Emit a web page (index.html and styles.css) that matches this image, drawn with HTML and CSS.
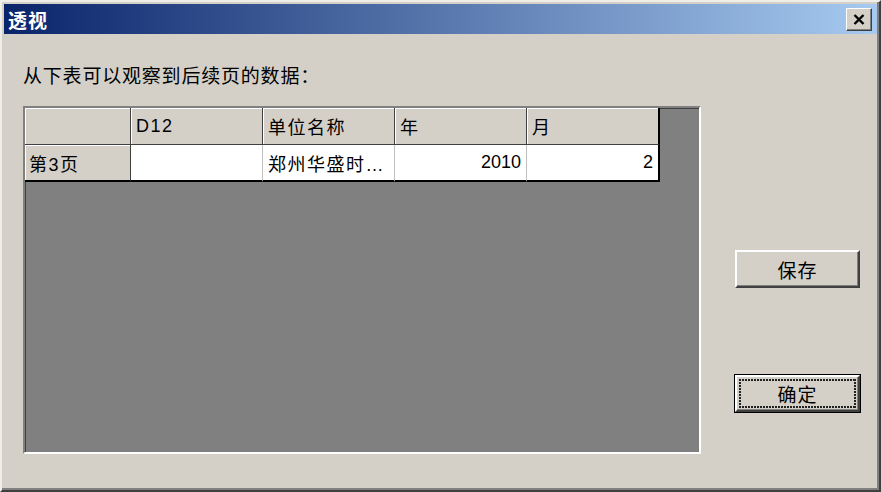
FILE: index.html
```html
<!DOCTYPE html>
<html lang="zh-CN">
<head>
    <meta charset="UTF-8">
    <meta name="viewport" content="width=device-width, initial-scale=1.0">
    <title>透视</title>
    <link rel="stylesheet" href="styles.css">
</head>
<body>
    <div class="window">
        <div class="titlebar">
            <span class="title">透视</span>
            <button class="close-btn" aria-label="关闭">
                <svg width="12" height="11" viewBox="0 0 12 11">
                    <path d="M1.5 1 L10.5 10 M10.5 1 L1.5 10" stroke="#000" stroke-width="2.4" fill="none"/>
                </svg>
            </button>
        </div>

        <div class="content">
            <div class="left">
                <p class="hint">从下表可以观察到后续页的数据：</p>

                <div class="panel">
                    <div class="grid">
                        <!-- header row -->
                        <div class="cell head"></div>
                        <div class="cell head">D12</div>
                        <div class="cell head">单位名称</div>
                        <div class="cell head">年</div>
                        <div class="cell head last">月</div>

                        <!-- data row -->
                        <div class="cell head rowhead">第3页</div>
                        <div class="cell data"></div>
                        <div class="cell data">郑州华盛时…</div>
                        <div class="cell data num">2010</div>
                        <div class="cell data num last">2</div>
                    </div>
                </div>
            </div>

            <div class="right">
                <button class="btn" id="save-btn">保存</button>
                <div class="btn default" id="ok-btn"><div class="focus">确定</div></div>
            </div>
        </div>
    </div>
</body>
</html>
```

FILE: styles.css
```css
body {
    margin: 0;
    background-color: #d4d0c8;
    font-family: "Noto Sans CJK SC", "Liberation Sans", sans-serif;
}

.window {
    width: 881px;
    height: 492px;
    box-sizing: border-box;
    background-color: #d4d0c8;
    border: 2px solid;
    border-color: #f0eee8 #404040 #404040 #f0eee8;
    box-shadow: inset -2px -2px #808080;
    padding: 2px;
    display: flex;
    flex-direction: column;
}

.titlebar {
    height: 30px;
    display: flex;
    align-items: center;
    justify-content: space-between;
    background: linear-gradient(to right, #0a246a, #a6caf0);
    padding: 0 5px 0 4px;
}

.title {
    color: white;
    font-weight: bold;
    font-size: 19px;
    letter-spacing: 1px;
}

.close-btn {
    width: 26px;
    height: 23px;
    padding: 0;
    display: flex;
    align-items: center;
    justify-content: center;
    background-color: #d4d0c8;
    border: 1px solid;
    border-color: #fff #404040 #404040 #fff;
    box-shadow: inset -1px -1px #808080;
}

.content {
    flex: 1;
    display: flex;
    padding-left: 19px;
}

.hint {
    margin: 29px 0 19px 0;
    font-size: 19px;
    line-height: 24px;
    letter-spacing: 0.8px;
    color: #000;
}

.panel {
    width: 678px;
    height: 348px;
    box-sizing: border-box;
    background-color: #808080;
    border: 2px solid;
    border-color: #808080 #ffffff #ffffff #808080;
    box-shadow: inset 1px 1px #404040, 1px 1px #d4d0c8;
}

.grid {
    display: grid;
    grid-template-columns: 106px 132px 132px 132px 133px;
    grid-auto-rows: 37px;
    width: 635px;
}

.cell {
    box-sizing: border-box;
    font-size: 18px;
    letter-spacing: 1.5px;
    padding: 0 5px;
    display: flex;
    align-items: center;
    white-space: nowrap;
    overflow: hidden;
    font-family: "Liberation Sans", "Noto Sans CJK SC", sans-serif;
}

.head {
    background-color: #d4d0c8;
    border-right: 1px solid #404040;
    border-bottom: 1px solid #404040;
    box-shadow: inset 1px 1px #ffffff;
}

.rowhead {
    border-bottom: 2px solid #000;
    padding-left: 4px;
}

.data {
    background-color: #ffffff;
    border-right: 1px solid #c0c0c0;
    border-bottom: 2px solid #000;
}

.num {
    justify-content: flex-end;
    letter-spacing: 0;
}

.last {
    border-right: 2px solid #000;
}

.right {
    margin-left: 34px;
    display: flex;
    flex-direction: column;
}

.btn {
    width: 125px;
    height: 38px;
    box-sizing: border-box;
    font-family: "Noto Sans CJK SC", sans-serif;
    font-size: 19px;
    letter-spacing: 1px;
    color: #000;
    background-color: #d4d0c8;
    border: 2px solid;
    border-color: #ffffff #404040 #404040 #ffffff;
    box-shadow: inset -1px -1px #808080;
    padding: 0;
}

#save-btn {
    margin-top: 216px;
}

.default {
    margin-top: 87px;
    height: 37px;
    padding: 2px;
    outline: 1px solid #000;
}

/* focus rectangle drawn with gradients so the dots stay crisp */
.focus {
    display: flex;
    align-items: center;
    justify-content: center;
    height: 100%;
    box-sizing: border-box;
    background:
        repeating-linear-gradient(90deg, #222 0 2px, transparent 2px 3px) top / 100% 2px no-repeat,
        repeating-linear-gradient(90deg, #222 0 2px, transparent 2px 3px) bottom / 100% 2px no-repeat,
        repeating-linear-gradient(0deg, #222 0 2px, transparent 2px 3px) left / 2px 100% no-repeat,
        repeating-linear-gradient(0deg, #222 0 2px, transparent 2px 3px) right / 2px 100% no-repeat;
}
```
